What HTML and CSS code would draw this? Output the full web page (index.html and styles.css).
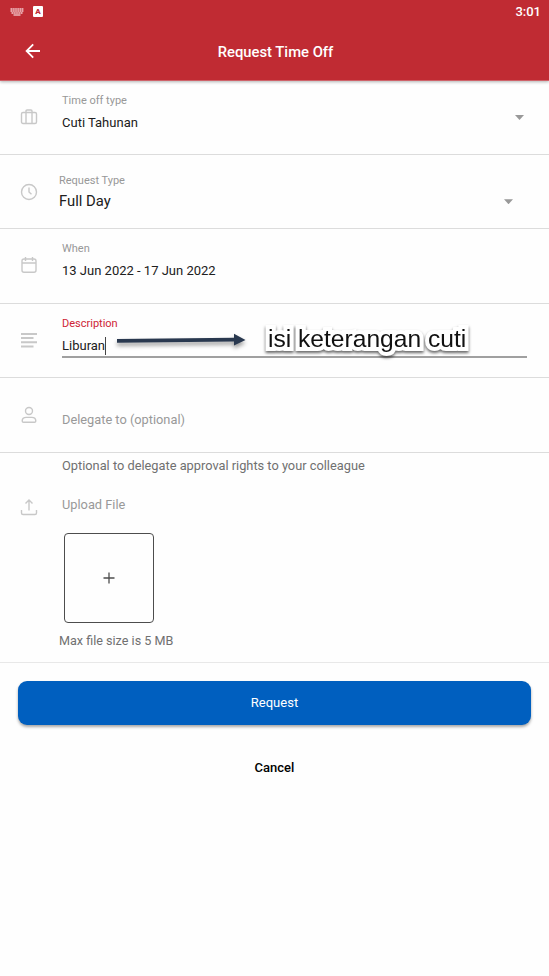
FILE: index.html
```html
<!DOCTYPE html>
<html lang="en">
<head>
<meta charset="utf-8">
<title>Request Time Off</title>
<link rel="stylesheet" href="styles.css">
</head>
<body>
<header class="top">
  <div class="status">
    <svg class="kbd" width="14" height="9" viewBox="0 0 14 9"><path d="M.5 1h13M.5 3h13" stroke="#f3cdd0" stroke-width="1.3" stroke-dasharray="1.5 .4"/><path d="M1.5 5h11" stroke="#f3cdd0" stroke-width="1.4" stroke-dasharray="1.5 .4"/><path d="M3.5 7h7" stroke="#f3cdd0" stroke-width="1.3"/></svg>
    <span class="app-badge">A</span>
    <time class="clock">3:01</time>
  </div>
  <div class="bar">
    <svg class="back" width="16" height="16" viewBox="0 0 16 16" fill="none" stroke="#fff" stroke-width="1.8"><path d="M15 8H2M8.2 1.4 1.6 8l6.6 6.6"/></svg>
    <h1 class="title">Request Time Off</h1>
  </div>
</header>
<main>
  <section class="row">
    <svg class="icon" viewBox="0 0 18 18"><rect x="1.5" y="4.5" width="15" height="11" rx="1.5"/><path d="M6 15.5V3q0-1 1-1h4q1 0 1 1v12.5"/></svg>
    <div class="field"><div class="label">Time off type</div><div class="value">Cuti Tahunan</div></div>
    <span class="caret"></span>
  </section>
  <section class="row row-select">
    <svg class="icon" viewBox="0 0 18 18"><circle cx="9" cy="9" r="7.5"/><path d="M9 4.5V9l2.5 2.3"/></svg>
    <div class="field"><div class="label">Request Type</div><div class="value">Full Day</div></div>
    <span class="caret"></span>
  </section>
  <section class="row">
    <svg class="icon" viewBox="0 0 18 18"><rect x="2" y="3" width="14" height="13.2" rx="2"/><path d="M2 7h14M5.5 1v4M12.5 1v4"/></svg>
    <div class="field"><div class="label">When</div><div class="value">13 Jun 2022 - 17 Jun 2022</div></div>
  </section>
  <section class="row row-active">
    <svg class="icon bars" viewBox="0 0 18 18"><path d="M1 3h16M1 7h12.5M1 11.3h16M1 15.5h12.5"/></svg>
    <div class="field"><div class="label">Description</div><div class="value input"><span class="typed">Liburan</span></div></div>
    <svg class="arrow" width="136" height="22" viewBox="0 0 136 22"><path d="M5 7 122 5.7V1.8L133.5 8 122 13.6V9.6L5 10.8Z" fill="#29384f"/></svg>
    <span class="note">isi keterangan cuti</span>
  </section>
  <section class="row row-delegate">
    <svg class="icon" viewBox="0 0 18 18"><circle cx="9" cy="5" r="3.5"/><path d="M3.5 16.2q-1.3 0-1.3-1.2 0-3.6 4-3.6h5.6q4 0 4 3.6 0 1.2-1.3 1.2Z"/></svg>
    <div class="field"><div class="placeholder">Delegate to (optional)</div></div>
  </section>
  <section class="upload">
    <p class="hint">Optional to delegate approval rights to your colleague</p>
    <div class="upload-head">
      <svg class="icon" viewBox="0 0 18 18"><path d="M1.5 12v3q0 1.5 1.5 1.5h12q1.5 0 1.5-1.5v-3M9 12.5V2.2M5.5 5.5 9 2l3.5 3.5"/></svg>
      <span class="placeholder">Upload File</span>
    </div>
    <button class="add" aria-label="Add file"><svg width="12" height="12" viewBox="0 0 12 12"><path d="M6 .5v11M.5 6h11" stroke="#4d4d4d" stroke-width="1.3"/></svg></button>
    <p class="limit">Max file size is 5 MB</p>
  </section>
  <div class="actions">
    <button class="request">Request</button>
    <button class="cancel">Cancel</button>
  </div>
</main>
</body>
</html>
```
FILE: styles.css
```css
* { box-sizing: border-box; }
body { margin: 0; min-height: 976px; background: #fefefe; font-family: Roboto, sans-serif; font-size: 13px; color: #202020; }
p, h1 { margin: 0; }
button { font: inherit; border: 0; padding: 0; background: none; }
.top { height: 81px; background: #c02b33; color: #fff; border-bottom: 1px solid #cf636a; box-shadow: 0 1px 3px rgba(0,0,0,.3); }
.status { display: flex; align-items: center; height: 23px; padding: 0 8px 0 10px; }
.kbd { margin-top: 1px; }
.app-badge { width: 10px; height: 11px; margin-left: 9px; border-radius: 1px; background: #fff; color: #c02b33; font-size: 8px; font-weight: 900; line-height: 11px; text-align: center; }
.clock { margin-left: auto; font-size: 13px; font-weight: 500; }
.bar { display: grid; grid-template-columns: 50px 1fr 50px; align-items: center; height: 56px; }
.back { margin-left: 25px; }
.title { font-size: 14.8px; font-weight: 500; text-align: center; padding: 1px 0 0 2px; }
.row { position: relative; display: flex; height: 74.3px; padding: 12px 25px 0 20px; border-bottom: 1px solid #dcdcdc; }
.icon { flex: none; width: 18px; height: 18px; margin-top: 15px; fill: none; stroke: #c8c8c8; stroke-width: 1.4; }
.bars { stroke-width: 1.9; }
.field { flex: 1; margin-left: 24px; }
.label { font-size: 11px; line-height: 16px; color: #989898; }
.value { margin-top: 5px; line-height: 18px; }
.caret { width: 9px; height: 5px; margin-top: 22px; background: #999; clip-path: polygon(0 0, 100% 0, 50% 100%); }
.row-select { height: 74px; padding-right: 36px; }
.row-select .icon { margin-top: 16px; }
.row-select .field { margin-left: 21px; padding-top: 6px; }
.row-select .label { line-height: 15px; }
.row-select .value { font-size: 14.8px; margin-top: 4px; }
.row-select .caret { margin-top: 32px; }
.row-active { height: 74.4px; padding-right: 22px; }
.row-active .label { color: #ce2435; }
.input { height: 21px; border-bottom: 2px solid #a0a0a0; }
.typed { display: inline-block; height: 18px; border-right: 1px solid #444; }
.arrow { position: absolute; left: 112px; top: 28px; filter: drop-shadow(0 3px 2px rgba(0,0,0,.4)); }
.note { position: absolute; left: 268px; top: 20px; font: 24.6px/30px "Liberation Sans", sans-serif; color: #111; -webkit-text-stroke: 8px #fff; stroke-linejoin: round; paint-order: stroke fill; white-space: nowrap; filter: drop-shadow(0 2px 1.5px rgba(0,0,0,.6)); }
.row-delegate { height: 75px; }
.row-delegate .icon { margin-top: 16px; }
.row-delegate .field { padding-top: 21px; }
.placeholder { font-size: 12.8px; line-height: 18px; color: #999; }
.upload { height: 210px; padding-top: 4px; border-bottom: 1px solid #e8e8e8; }
.hint { margin-left: 62px; font-size: 12.8px; line-height: 18px; color: #707070; }
.upload-head { display: flex; align-items: center; margin: 19px 0 0 20px; gap: 24px; }
.upload-head .icon { margin-top: 4px; }
.add { display: grid; place-items: center; width: 90px; height: 90px; margin: 17px 0 0 64px; border: 1px solid #4d4d4d; border-radius: 4px; }
.limit { margin: 9px 0 0 59px; font-size: 12.6px; line-height: 18px; color: #707070; }
.actions { display: flex; flex-direction: column; align-items: center; padding: 18px 18px 0; }
.request { width: 100%; height: 44px; border-radius: 9px; background: #005fbf; color: #fff; box-shadow: 0 2px 3px rgba(0,0,0,.35); }
.cancel { margin-top: 34px; line-height: 18px; font-weight: 500; color: #000; }
```
